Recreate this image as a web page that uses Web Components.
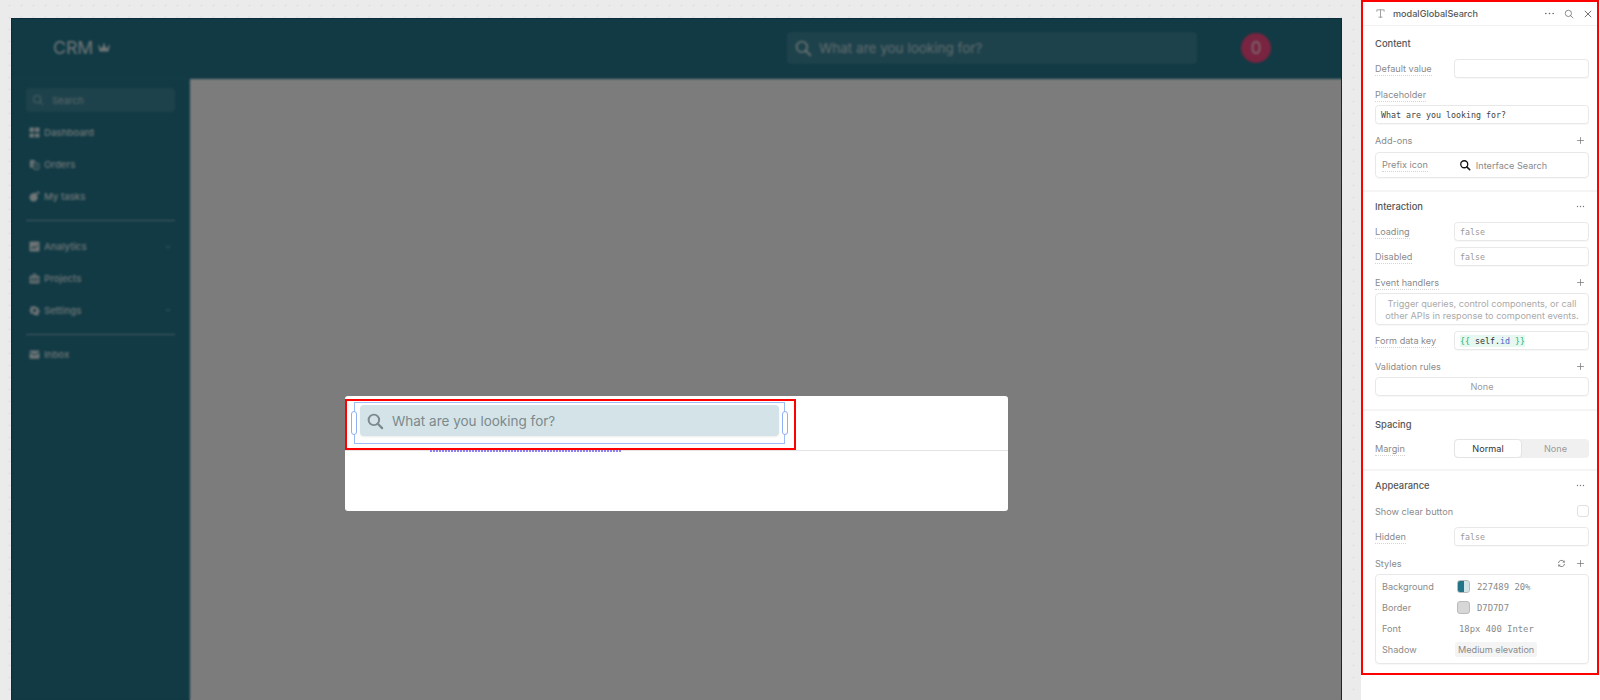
<!DOCTYPE html>
<html lang="en">
<head>
<meta charset="utf-8">
<title>CRM editor</title>
<style>
  html, body { margin: 0; height: 100%; overflow: hidden; }
  body { font-family: Inter, "Noto Sans", sans-serif; background: #ebebeb; }
  editor-shell { height: 700px; }
</style>
</head>
<body>
<editor-shell>
  <crm-app slot="canvas">
    <crm-modal></crm-modal>
  </crm-app>
  <inspector-panel slot="panel"></inspector-panel>
</editor-shell>

<script>
const ICONS = {
  search: '<circle cx="10.5" cy="10.5" r="7" fill="none" stroke="currentColor" stroke-width="2.6"/><path d="M15.7 15.7 21.5 21.5" stroke="currentColor" stroke-width="3" stroke-linecap="round"/>',
  searchThin: '<circle cx="10.5" cy="10.5" r="7.5" fill="none" stroke="currentColor" stroke-width="1.8"/><path d="M16 16 21.5 21.5" stroke="currentColor" stroke-width="1.8" stroke-linecap="round"/>',
  dashboard: '<rect x="1" y="1" width="10" height="10" rx="1.5" fill="currentColor"/><rect x="13" y="1" width="10" height="10" rx="1.5" fill="currentColor"/><rect x="1" y="14" width="10" height="9" rx="1.5" fill="currentColor"/><rect x="13" y="14" width="10" height="9" rx="1.5" fill="currentColor"/>',
  orders: '<path d="M3 2h8l3 3v2h-3a3 3 0 0 0-3 3v9H3a1 1 0 0 1-1-1V3a1 1 0 0 1 1-1z" fill="currentColor"/><rect x="10" y="9" width="12" height="14" rx="2" fill="none" stroke="currentColor" stroke-width="2"/><path d="M16 12v8" stroke="currentColor" stroke-width="2"/>',
  tasks: '<circle cx="10" cy="14" r="9" fill="currentColor"/><path d="M10 5l5-2 3 7z" fill="currentColor"/><circle cx="20" cy="4" r="3" fill="currentColor"/>',
  analytics: '<path fill-rule="evenodd" d="M3 1h18a2 2 0 0 1 2 2v18a2 2 0 0 1-2 2H3a2 2 0 0 1-2-2V3a2 2 0 0 1 2-2zm2 15v2.5l5-4.5 3 3 6-7V7l-6 7-3-3z" fill="currentColor"/>',
  projects: '<path fill-rule="evenodd" d="M8 6V3a2 2 0 0 1 2-2h4a2 2 0 0 1 2 2v3h5a2 2 0 0 1 2 2v13a2 2 0 0 1-2 2H3a2 2 0 0 1-2-2V8a2 2 0 0 1 2-2zm2.5 0h3V3.500h-3zM3 11v2h18v-2zm0 5v2h18v-2z" fill="currentColor"/>',
  settings: '<path fill-rule="evenodd" d="M10 1h4l.7 3.200 2.300 1 2.800-1.700 2.800 2.800-1.700 2.800 1 2.300 3.100.6v4l-3.100.7-1 2.300 1.700 2.800-2.800 2.800-2.800-1.700-2.300 1L14 23h-4l-.7-3.100-2.300-1-2.800 1.700-2.800-2.800 1.700-2.800-1-2.300L-1 14v-4l3.100-.7 1-2.300-1.700-2.800 2.800-2.800 2.800 1.700 2.300-1zM12 8a4 4 0 1 0 0 8 4 4 0 0 0 0-8z" fill="currentColor" transform="translate(1.200 1.200) scale(.9)"/>',
  inbox: '<path d="M3 3h18a2 2 0 0 1 2 2v.8l-11 6-11-6V5a2 2 0 0 1 2-2zM1 8.200l11 6 11-6V19a2 2 0 0 1-2 2H3a2 2 0 0 1-2-2z" fill="currentColor"/>',
  chevron: '<path d="M6 9l6 6 6-6" fill="none" stroke="currentColor" stroke-width="2.500" stroke-linecap="round" stroke-linejoin="round"/>',
  crown: '<path d="M1 9l6 3.500L12 5l5 7.500L23 9l-2 10H3z" fill="currentColor"/><circle cx="1.800" cy="8" r="1.800" fill="currentColor"/><circle cx="12" cy="4.500" r="2" fill="currentColor"/><circle cx="22.200" cy="8" r="1.800" fill="currentColor"/>',
  dots: '<circle cx="4" cy="12" r="1.800" fill="currentColor"/><circle cx="12" cy="12" r="1.800" fill="currentColor"/><circle cx="20" cy="12" r="1.800" fill="currentColor"/>',
  close: '<path d="M5 5l14 14M19 5 5 19" stroke="currentColor" stroke-width="2.200" stroke-linecap="round"/>',
  plus: '<path d="M12 4v16M4 12h16" stroke="currentColor" stroke-width="2" stroke-linecap="round"/>',
  sync: '<path d="M4 10a8 8 0 0 1 13.500-4L20 8M20 14a8 8 0 0 1-13.500 4L4 16" fill="none" stroke="currentColor" stroke-width="2.400" stroke-linecap="round"/><path d="M20 3v6h-6M4 21v-6h6" fill="currentColor"/>',
  text: '<path d="M4 7V4h16v3M12 4v16M8.500 20h7" fill="none" stroke="currentColor" stroke-width="1.700" stroke-linecap="round" stroke-linejoin="round"/>'
};

function icon(name, size) {
  return `<svg width="${size}" height="${size}" viewBox="0 0 24 24" aria-hidden="true" style="display:block;flex:none">${ICONS[name]}</svg>`;
}

class EditorShell extends HTMLElement {
  constructor() {
    super();
    this.attachShadow({ mode: 'open' }).innerHTML = `
      <style>
        :host { display: flex; align-items: stretch; width: 1600px; }
        .canvas {
          width: 1361px; box-sizing: border-box; padding: 18px 19px 0 11px; overflow: hidden;
          background-color: #ebebeb;
          background-image: radial-gradient(circle at 9.5px 5.5px, #e0e0e0 .8px, transparent 1.2px);
          background-size: 12px 12px;
        }
      </style>
      <div class="canvas"><slot name="canvas"></slot></div>
      <slot name="panel"></slot>`;
  }
}

class CrmApp extends HTMLElement {
  constructor() {
    super();
    const nav = (ic, label, chev) => `<nav-item icon="${ic}" label="${label}"${chev ? ' chevron' : ''}></nav-item>`;
    this.attachShadow({ mode: 'open' }).innerHTML = `
      <style>
        :host { display: block; position: relative; width: 1331px; height: 682px; overflow: hidden; background: #f8f8f8; color: #fff; }
        header { display: flex; align-items: center; height: 61px; box-sizing: border-box; padding-right: 71px; background: #227489; border-bottom: 1px solid #2a7c91; }
        .logo { display: flex; align-items: center; gap: 5px; margin-left: 42px; font-size: 17.700px; line-height: 1; color: rgba(255,255,255,.86); }
        .top-search { display: flex; align-items: center; gap: 7.500px; box-sizing: border-box; width: 410px; height: 32px; margin-left: auto; padding-left: 6.500px; border-radius: 4px; background: rgba(255,255,255,.12); color: rgba(255,255,255,.68); font-size: 13.500px; }
        .avatar { display: grid; place-items: center; width: 30px; height: 30px; margin-left: 44px; border-radius: 50%; background: #f24880; font-size: 17px; color: rgba(255,255,255,.8); }
        .body { display: flex; height: 621px; }
        aside { width: 179px; box-sizing: border-box; padding: 9px 14px 0 15px; background: #227489; border-right: 1px solid #2a7c91; }
        .side-search { display: flex; align-items: center; gap: 8px; height: 24px; padding-left: 6px; border-radius: 4px; background: rgba(255,255,255,.12); color: rgba(255,255,255,.6); font-size: 9.500px; margin-bottom: 5px; }
        hr { height: 1px; margin: 8px 0 10px; border: 0; background: rgba(255,255,255,.5); }
        hr.last { margin-bottom: 4px; }
        main { flex: 1; background: #f8f8f8; }
        .scrim { position: absolute; inset: 0; display: flex; justify-content: center; padding-top: 378px; box-sizing: border-box; background: rgba(0,0,0,.5); backdrop-filter: blur(.8px); }
        .edge { position: absolute; inset: 0; border: solid #0b2c3c; border-width: 1px 1px 0 1px; pointer-events: none; }
      </style>
      <header>
        <div class="logo"><span>CRM</span>${icon('crown', 12)}</div>
        <div class="top-search">${icon('search', 18)}<span>What are you looking for?</span></div>
        <div class="avatar">0</div>
      </header>
      <div class="body">
        <aside>
          <div class="side-search">${icon('searchThin', 12)}<span>Search</span></div>
          ${nav('dashboard', 'Dashboard')}
          ${nav('orders', 'Orders')}
          ${nav('tasks', 'My tasks')}
          <hr>
          ${nav('analytics', 'Analytics', true)}
          ${nav('projects', 'Projects')}
          ${nav('settings', 'Settings', true)}
          <hr class="last">
          ${nav('inbox', 'Inbox')}
        </aside>
        <main></main>
      </div>
      <div class="scrim"><slot></slot></div>
      <div class="edge"></div>`;
  }
}

class NavItem extends HTMLElement {
  connectedCallback() {
    if (this.shadowRoot) return;
    const label = this.getAttribute('label');
    const chev = this.hasAttribute('chevron') ? `<span class="chev">${icon('chevron', 8)}</span>` : '';
    this.attachShadow({ mode: 'open' }).innerHTML = `
      <style>
        :host { display: flex; align-items: center; gap: 4px; height: 31.700px; padding-left: 3px; font-size: 9.600px; font-weight: 500; color: rgba(255,255,255,.85); }
        .chev { margin-left: auto; margin-right: 3px; color: rgba(255,255,255,.55); }
      </style>
      ${icon(this.getAttribute('icon'), 11)}<span>${label}</span>${chev}`;
  }
}

class CrmModal extends HTMLElement {
  constructor() {
    super();
    this.attachShadow({ mode: 'open' }).innerHTML = `
      <style>
        :host { display: block; width: 663px; height: 115px; border-radius: 3px; background: #fff; }
        .head { height: 55px; box-sizing: border-box; padding: 9px 0 0 15px; border-bottom: 1px solid #e4e4e4; }
        .wrap { position: relative; width: 419px; height: 31px; }
        .input { display: flex; align-items: center; gap: 8.500px; height: 100%; box-sizing: border-box; padding-left: 5.500px; border-radius: 4px; background: #d3e3e7; box-shadow: 0 1px 2px rgba(0,0,0,.08); color: #7c898d; font-size: 13.500px; }
        .sel { position: absolute; inset: -3px -6px -8px -6px; border: 1px solid #9dbcf5; }
        .handle { position: absolute; top: 8px; width: 4px; height: 22px; border: 1px solid #8fb0f5; border-radius: 3px; background: #fff; }
        .handle.l { left: -4px; }
        .handle.r { right: -4px; }
        .red { position: absolute; inset: -6px -17px -14px -15px; border: 2px solid #f00; }
        .dash { position: absolute; left: 70px; top: 45px; width: 192px; height: 2px; background: repeating-linear-gradient(90deg, #8f7ff0 0 2px, transparent 2px 3px); }
      </style>
      <div class="head">
        <div class="wrap">
          <div class="input">${icon('search', 18)}<span>What are you looking for?</span></div>
          <div class="sel"><i class="handle l"></i><i class="handle r"></i></div>
          <div class="dash"></div>
          <div class="red"></div>
        </div>
      </div>`;
  }
}

// label on the left, control on the right
class InsRow extends HTMLElement {
  connectedCallback() {
    if (this.shadowRoot) return;
    const label = this.getAttribute('label');
    const plain = this.hasAttribute('plain') ? 'plain' : '';
    this.attachShadow({ mode: 'open' }).innerHTML = `
      <style>
        :host { display: grid; grid-template-columns: 79px 1fr; align-items: center; min-height: 18px; }
        .l { justify-self: start; padding-top: 2px; font-size: 9.150px; line-height: 12px; color: #8a8a8a; border-bottom: 1px dotted #d4d4d4; }
        .l.plain { border-bottom-color: transparent; }
      </style>
      <span class="l ${plain}">${label}</span><slot></slot>`;
  }
}

class InsBox extends HTMLElement {
  constructor() {
    super();
    this.attachShadow({ mode: 'open' }).innerHTML = `
      <style>
        :host { display: flex; align-items: center; box-sizing: border-box; height: 18.500px; padding: 2px 5px 0; border: 1px solid #e8e8e8; border-radius: 3.500px; background: #fff; box-shadow: 0 1px 1px rgba(0,0,0,.03); font: 8.300px "DejaVu Sans Mono", monospace; color: #444; white-space: nowrap; }
        :host([muted]) { color: #9a9a9a; }
      </style><slot></slot>`;
  }
}

class InsHead extends HTMLElement {
  connectedCallback() {
    if (this.shadowRoot) return;
    const action = this.getAttribute('action');
    const acts = action ? action.split(' ').map((a) => icon(a, 9)).join('') : '';
    const strong = this.hasAttribute('strong');
    const dotted = this.hasAttribute('dotted') ? 'border-bottom: 1px dotted #d4d4d4;' : '';
    this.attachShadow({ mode: 'open' }).innerHTML = `
      <style>
        :host { display: flex; align-items: center; justify-content: space-between; height: 18px; padding-right: 4px; font-size: ${strong ? 9.4 : 9.15}px; color: ${strong ? '#555' : '#8a8a8a'}; font-weight: ${strong ? 500 : 400}; }
        .n { padding-top: 2px; line-height: 12px; ${dotted} }
        .a { display: flex; gap: 10px; color: #777; }
      </style>
      <span class="n">${this.getAttribute('label')}</span><span class="a">${acts}</span>`;
  }
}

class InspectorPanel extends HTMLElement {
  constructor() {
    super();
    this.attachShadow({ mode: 'open' }).innerHTML = `
      <style>
        :host { display: block; position: relative; width: 239px; height: 700px; background: #fff; color: #444; font-size: 9.150px; }
        .frame { width: 238px; height: 675px; box-sizing: border-box; border: 2px solid #f00; }
        .top { display: flex; align-items: center; box-sizing: border-box; height: 24px; padding: 0 4px 0 11.500px; border-bottom: 1px solid #f2f2f2; color: #666; }
        .top .t { margin-right: 7.500px; color: #888; }
        .top b { font-weight: 500; font-size: 9.100px; color: #555; margin-right: auto; }
        .top .i { display: flex; gap: 9px; align-items: center; }
        section { padding: 5px 8px 0 12px; border-bottom: 2px solid #f5f5f5; box-sizing: border-box; }
        section.last { border-bottom: 0; }
        .card { border: 1px solid #e8e8e8; border-radius: 4px; box-shadow: 0 1px 1px rgba(0,0,0,.03); color: #8a8a8a; }
        .addon { display: flex; align-items: center; height: 26px; margin-top: 3px; padding-left: 6px; box-sizing: border-box; }
        .addon .p { border-bottom: 1px dotted #d4d4d4; line-height: 12px; }
        .addon .s { margin-left: 31px; display: flex; align-items: center; gap: 5px; }
        .addon svg { color: #111; }
        .hint { height: 32px; margin-top: 1.500px; padding-top: 3.500px; box-sizing: border-box; text-align: center; font-size: 9.150px; line-height: 12px; color: #aaa; }
        .none { display: grid; place-items: center; height: 19px; margin-top: 2px; box-sizing: border-box; color: #9a9a9a; }
        .code { background: #e6f8ef; line-height: 12px; color: #333; }
        .code i { font-style: normal; color: #22b573; }
        .code u { text-decoration: none; color: #4a63d0; }
        .seg { display: flex; height: 18.500px; border-radius: 4px; background: #f0f0f0; color: #9a9a9a; }
        .seg span { flex: 1; display: grid; place-items: center; }
        .seg .on { flex: none; width: 68px; box-sizing: border-box; background: #fff; border: 1px solid #e4e4e4; border-radius: 4px; color: #333; }
        .check { justify-self: end; width: 12px; height: 12px; box-sizing: border-box; border: 1px solid #e0e0e0; border-radius: 3px; }
        .styles { height: 90px; margin-top: 1.500px; padding: 1.500px 6px 0; box-sizing: border-box; }
        .styles div { display: flex; align-items: center; height: 21px; }
        .styles .k { width: 75px; }
        .styles .v { font: 8.900px "DejaVu Sans Mono", monospace; color: #8a8a8a; }
        .sw { width: 13px; height: 13px; margin-right: 7px; box-sizing: border-box; border: 1px solid #bbb; border-radius: 3px; }
        .sw.a { background: linear-gradient(90deg, #227489 50%, #d3e3e7 50%); }
        .sw.b { background: #d7d7d7; }
        .chip { margin-left: -2px; padding: 2px 3px; background: #f4f4f4; border-radius: 3px; font-size: 9.150px; color: #8a8a8a; }
      </style>
      <div class="frame">
        <div class="top">
          <span class="t">${icon('text', 11)}</span><b>modalGlobalSearch</b>
          <span class="i">${icon('dots', 11)}${icon('searchThin', 10)}${icon('close', 10)}</span>
        </div>
        <section style="height:166px;padding-top:8px">
          <ins-head label="Content" strong></ins-head>
          <ins-row label="Default value" style="margin-top:7px"><ins-box></ins-box></ins-row>
          <ins-row label="Placeholder" style="margin-top:7.500px;grid-template-columns:1fr"></ins-row>
          <ins-box style="margin-top:2px">What are you looking for?</ins-box>
          <ins-head label="Add-ons" action="plus" style="margin-top:7.500px"></ins-head>
          <div class="card addon"><span class="p">Prefix icon</span><span class="s">${icon('search', 12)}<span>Interface Search</span></span></div>
        </section>
        <section style="height:219px">
          <ins-head label="Interaction" action="dots" strong></ins-head>
          <ins-row label="Loading" style="margin-top:7px"><ins-box muted>false</ins-box></ins-row>
          <ins-row label="Disabled" style="margin-top:6.500px"><ins-box muted>false</ins-box></ins-row>
          <ins-head label="Event handlers" action="plus" dotted style="margin-top:8px"></ins-head>
          <div class="card hint">Trigger queries, control components, or call other APIs in response to component events.</div>
          <ins-row label="Form data key" style="margin-top:6px"><ins-box><span class="code"><i>{{</i> self.<u>id</u> <i>}}</i></span></ins-box></ins-row>
          <ins-head label="Validation rules" action="plus" style="margin-top:7.500px"></ins-head>
          <div class="card none">None</div>
        </section>
        <section style="height:60px;padding-top:4px">
          <ins-head label="Spacing" strong></ins-head>
          <ins-row label="Margin" style="margin-top:6px"><div class="seg"><span class="on">Normal</span><span>None</span></div></ins-row>
        </section>
        <section class="last">
          <ins-head label="Appearance" action="dots" strong></ins-head>
          <ins-row label="Show clear button" plain style="margin-top:8px;grid-template-columns:1fr 12px"><span class="check"></span></ins-row>
          <ins-row label="Hidden" style="margin-top:7px"><ins-box muted>false</ins-box></ins-row>
          <ins-head label="Styles" action="sync plus" style="margin-top:8.500px"></ins-head>
          <div class="card styles">
            <div><span class="k">Background</span><span class="sw a"></span><span class="v">227489 20%</span></div>
            <div><span class="k">Border</span><span class="sw b"></span><span class="v">D7D7D7</span></div>
            <div><span class="k">Font</span><span class="v" style="margin-left:2px">18px 400 Inter</span></div>
            <div><span class="k">Shadow</span><span class="chip">Medium elevation</span></div>
          </div>
        </section>
      </div>`;
  }
}

customElements.define('editor-shell', EditorShell);
customElements.define('crm-app', CrmApp);
customElements.define('nav-item', NavItem);
customElements.define('crm-modal', CrmModal);
customElements.define('ins-row', InsRow);
customElements.define('ins-box', InsBox);
customElements.define('ins-head', InsHead);
customElements.define('inspector-panel', InspectorPanel);
</script>
</body>
</html>
